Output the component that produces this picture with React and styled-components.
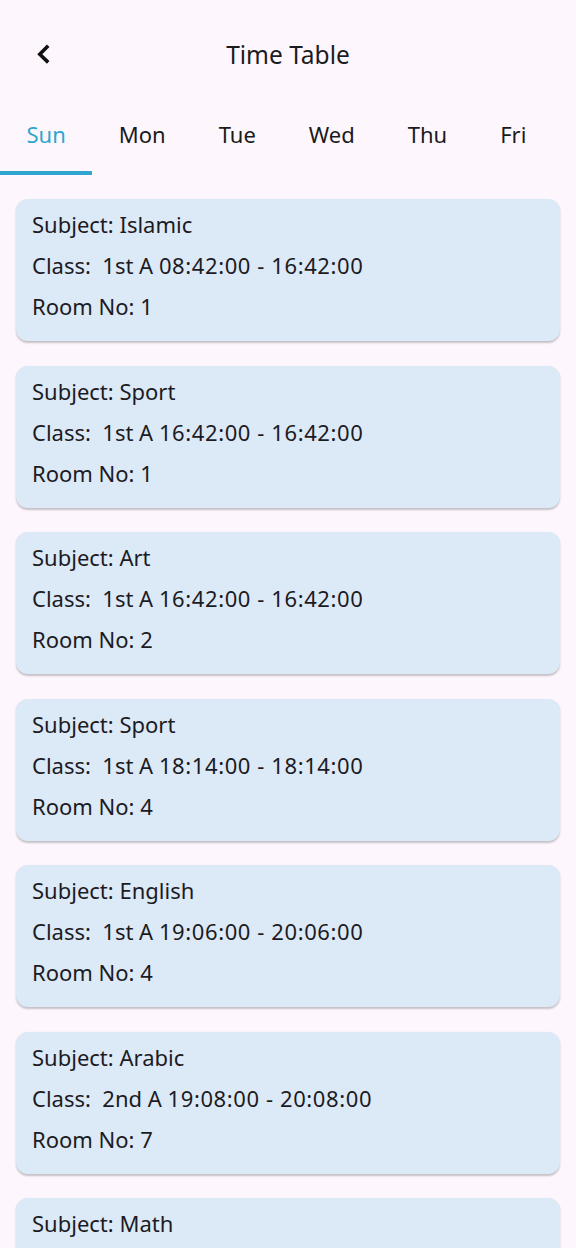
import React from "react";
import styled, { createGlobalStyle } from "styled-components";

const Global = createGlobalStyle`
  html, body { margin: 0; padding: 0; background: #fdf7fd; }
  body { font-family: "Noto Sans", "Open Sans", sans-serif; color: #1c1b1f; }
  * { box-sizing: border-box; }
`;

const Page = styled.div`
  width: 576px;
  height: 1248px;
  overflow: hidden;
  background: #fdf7fd;
`;

const Header = styled.header`
  height: 108px;
  display: grid;
  grid-template-columns: 88px 1fr 88px;
  align-items: center;
`;

const BackButton = styled.button`
  justify-self: start;
  margin-left: 34px;
  margin-top: 0;
  width: 24px;
  height: 24px;
  padding: 0;
  border: none;
  background: none;
  display: flex;
  color: #111;
`;

const Title = styled.h1`
  margin: 0;
  text-align: center;
  font-size: 24.5px;
  font-weight: 400;
  color: #1c1b1f;
`;

const Tabs = styled.nav`
  height: 67px;
  display: flex;
  overflow: hidden;
  white-space: nowrap;
`;

const Tab = styled.div`
  position: relative;
  flex: none;
  padding: 13px 26.5px 0;
  font-size: 22px;
  line-height: 26px;
  color: ${(p) => (p.$active ? "#2ea6cf" : "#1a1a1a")};
`;

const Indicator = styled.span`
  position: absolute;
  left: 0;
  right: 0;
  bottom: 0;
  height: 4px;
  background: #2ea6cf;
`;

const List = styled.main`
  display: flex;
  flex-direction: column;
  gap: 24.5px;
  padding: 24px 16px 0 16px;
`;

const Card = styled.section`
  background: #dce9f7;
  border-radius: 12px;
  padding: 12px 16px 22px;
  display: flex;
  flex-direction: column;
  gap: 15px;
  box-shadow: 0 1.5px 2px rgba(0, 0, 0, 0.22);
`;

const Line = styled.div`
  font-size: 22px;
  line-height: 26px;
  color: #1c1b1f;
  white-space: pre;
`;

const Time = styled.span`
  letter-spacing: 0.6px;
`;

const days = ["Sun", "Mon", "Tue", "Wed", "Thu", "Fri"];

const items = [
  { subject: "Islamic", cls: "1st A", time: "08:42:00 - 16:42:00", room: 1 },
  { subject: "Sport", cls: "1st A", time: "16:42:00 - 16:42:00", room: 1 },
  { subject: "Art", cls: "1st A", time: "16:42:00 - 16:42:00", room: 2 },
  { subject: "Sport", cls: "1st A", time: "18:14:00 - 18:14:00", room: 4 },
  { subject: "English", cls: "1st A", time: "19:06:00 - 20:06:00", room: 4 },
  { subject: "Arabic", cls: "2nd A", time: "19:08:00 - 20:08:00", room: 7 },
  { subject: "Math", cls: "2nd A", time: "19:10:00 - 20:10:00", room: 7 },
];

const BackIcon = () => (
  <svg width="24" height="24" viewBox="0 0 24 24" fill="none">
    <path
      d="M14.2 3.8 5.8 12.2l8.4 8.2"
      stroke="currentColor"
      strokeWidth="3.6"
      strokeLinejoin="miter"
      strokeLinecap="butt"
    />
  </svg>
);

export default function App() {
  return (
    <Page>
      <Global />
      <Header>
        <BackButton aria-label="Back">
          <BackIcon />
        </BackButton>
        <Title>Time Table</Title>
        <span />
      </Header>
      <Tabs>
        {days.map((d, i) => (
          <Tab key={d} $active={i === 0}>
            {d}
            {i === 0 && <Indicator />}
          </Tab>
        ))}
      </Tabs>
      <List>
        {items.map((it, i) => (
          <Card key={i}>
            <Line>Subject: {it.subject}</Line>
            <Line>
              {`Class:  ${it.cls} `}
              <Time>{it.time}</Time>
            </Line>
            <Line>Room No: {it.room}</Line>
          </Card>
        ))}
      </List>
    </Page>
  );
}
